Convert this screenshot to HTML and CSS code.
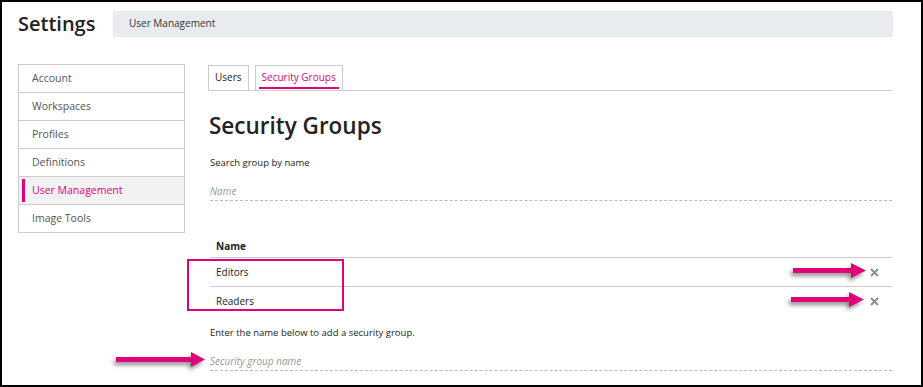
FILE: index.html
```html
<!DOCTYPE html>
<html lang="en">
<head>
    <meta charset="UTF-8">
    <meta name="viewport" content="width=device-width, initial-scale=1.0">
    <title>Settings - Security Groups</title>
    <link rel="stylesheet" href="styles.css">
</head>
<body>
    <div class="frame">
        <!-- Page header -->
        <header class="top">
            <h1 class="page-title">Settings</h1>
            <div class="crumb">User Management</div>
        </header>

        <div class="main">
            <!-- Left menu -->
            <nav class="side">
                <a class="side-item">Account</a>
                <a class="side-item">Workspaces</a>
                <a class="side-item">Profiles</a>
                <a class="side-item">Definitions</a>
                <a class="side-item active">User Management</a>
                <a class="side-item">Image Tools</a>
            </nav>

            <!-- Content -->
            <section class="content">
                <div class="tabs">
                    <div class="tab">Users</div>
                    <div class="tab active"><span>Security Groups</span></div>
                </div>

                <h2 class="section-title">Security Groups</h2>

                <p class="label">Search group by name</p>
                <div class="field">Name</div>

                <table class="groups">
                    <thead>
                        <tr><th>Name</th><th></th></tr>
                    </thead>
                    <tbody>
                        <tr>
                            <td>Editors</td>
                            <td class="del"><svg width="9" height="9" viewBox="0 0 9 9"><path d="M1 1 L8 8 M8 1 L1 8" stroke="#8a8f96" stroke-width="2"/></svg></td>
                        </tr>
                        <tr>
                            <td>Readers</td>
                            <td class="del"><svg width="9" height="9" viewBox="0 0 9 9"><path d="M1 1 L8 8 M8 1 L1 8" stroke="#8a8f96" stroke-width="2"/></svg></td>
                        </tr>
                    </tbody>
                </table>

                <p class="label add-note">Enter the name below to add a security group.</p>
                <div class="field">Security group name</div>
            </section>
        </div>

        <!-- Annotations drawn over the screenshot -->
        <div class="mark-box"></div>
        <svg class="arrow arrow-1" width="80" height="22" viewBox="0 0 80 22"><polygon points="2,8 60,8 60,3 75,10.5 60,18 60,13 2,13"/></svg>
        <svg class="arrow arrow-2" width="80" height="22" viewBox="0 0 80 22"><polygon points="2,8 60,8 60,3 75,10.5 60,18 60,13 2,13"/></svg>
        <svg class="arrow arrow-3" width="96" height="22" viewBox="0 0 96 22"><polygon points="2,8 77,8 77,3 91,10.5 77,18 77,13 2,13"/></svg>
    </div>
</body>
</html>
```

FILE: styles.css
```css
/* Page style */
body {
    margin: 0;
    padding: 0;
    font-family: "Open Sans", "Noto Sans", sans-serif;
    color: #222;
    background: #fff;
}

/* Screenshot frame */
.frame {
    position: relative;
    width: 923px;
    height: 387px;
    box-sizing: border-box;
    border: 2px solid #000;
    overflow: hidden;
}

/* Header */
.top {
    display: flex;
    align-items: center;
    padding: 9px 28px 0 16px;
}

.page-title {
    width: 95px;
    margin: 0;
    font-size: 20px;
    font-weight: 600;
    line-height: 26px;
    color: #222;
}

.crumb {
    flex: 1;
    height: 26px;
    line-height: 25px;
    padding-left: 16px;
    background: #e9ecef;
    font-size: 10px;
    color: #333;
}

/* Main area */
.main {
    display: flex;
    gap: 23px;
    margin-top: 27px;
    padding: 0 29px 0 16px;
}

/* Left menu */
.side {
    width: 167px;
    box-sizing: border-box;
    border: 1px solid #ccc;
    align-self: flex-start;
}

.side-item {
    display: block;
    height: 27px;
    line-height: 27px;
    padding-left: 13px;
    border-bottom: 1px solid #ccc;
    font-size: 10.5px;
    color: #555;
    position: relative;
}

.side-item:last-child {
    border-bottom: none;
}

.side-item.active {
    background: #f2f2f2;
    color: #e2007a;
}

.side-item.active::before {
    content: "";
    position: absolute;
    left: 3px;
    top: 2px;
    bottom: 2px;
    width: 3px;
    background: #e2007a;
}

/* Content */
.content {
    flex: 1;
}

.tabs {
    display: flex;
    gap: 6px;
    margin-top: 1px;
    border-bottom: 1px solid #ccc;
}

.tab {
    height: 24px;
    line-height: 23px;
    padding: 0 6px;
    border: 1px solid #ccc;
    border-bottom: none;
    font-size: 10px;
    color: #222;
}

.tab.active {
    padding: 0 3px;
    color: #e2007a;
}

.tab.active span {
    display: inline-block;
    padding: 0 3px;
    height: 21px;
    border-bottom: 2px solid #e2007a;
}

.section-title {
    margin: 20px 0 0 1px;
    font-size: 22.5px;
    font-weight: 600;
    line-height: 30px;
    color: #222;
}

.label {
    margin: 15px 0 0 2px;
    font-size: 9.5px;
    line-height: 14px;
    color: #222;
}

.field {
    margin: 14px 0 0 2px;
    height: 16px;
    line-height: 14px;
    border-bottom: 1px dashed #bbb;
    font-size: 10px;
    font-style: italic;
    color: #999;
}

/* Groups table */
.groups {
    width: calc(100% - 2px);
    margin: 34px 0 0 2px;
    border-collapse: collapse;
    font-size: 10px;
}

.groups th {
    text-align: left;
    font-weight: 700;
    height: 22px;
    padding: 0 0 0 6px;
    border-bottom: 1px solid #ccc;
    color: #222;
}

.groups td {
    height: 28px;
    padding: 0 0 0 6px;
    color: #222;
}

.groups tbody tr:first-child td {
    border-bottom: 1px solid #ccc;
}

.groups .del {
    width: 20px;
    text-align: right;
    padding-right: 13px;
}

.groups .del svg {
    display: block;
    margin-left: auto;
}

.add-note {
    margin-top: 11px;
}

/* Annotations */
.mark-box {
    position: absolute;
    left: 185px;
    top: 257px;
    width: 157px;
    height: 52px;
    box-sizing: border-box;
    border: 2px solid #e2007a;
}

.arrow {
    position: absolute;
    fill: #e2007a;
    filter: drop-shadow(-2px 3px 2px rgba(0, 0, 0, 0.45));
}

.arrow-1 {
    left: 789px;
    top: 258px;
}

.arrow-2 {
    left: 787px;
    top: 287px;
}

.arrow-3 {
    left: 112px;
    top: 347px;
}
```
